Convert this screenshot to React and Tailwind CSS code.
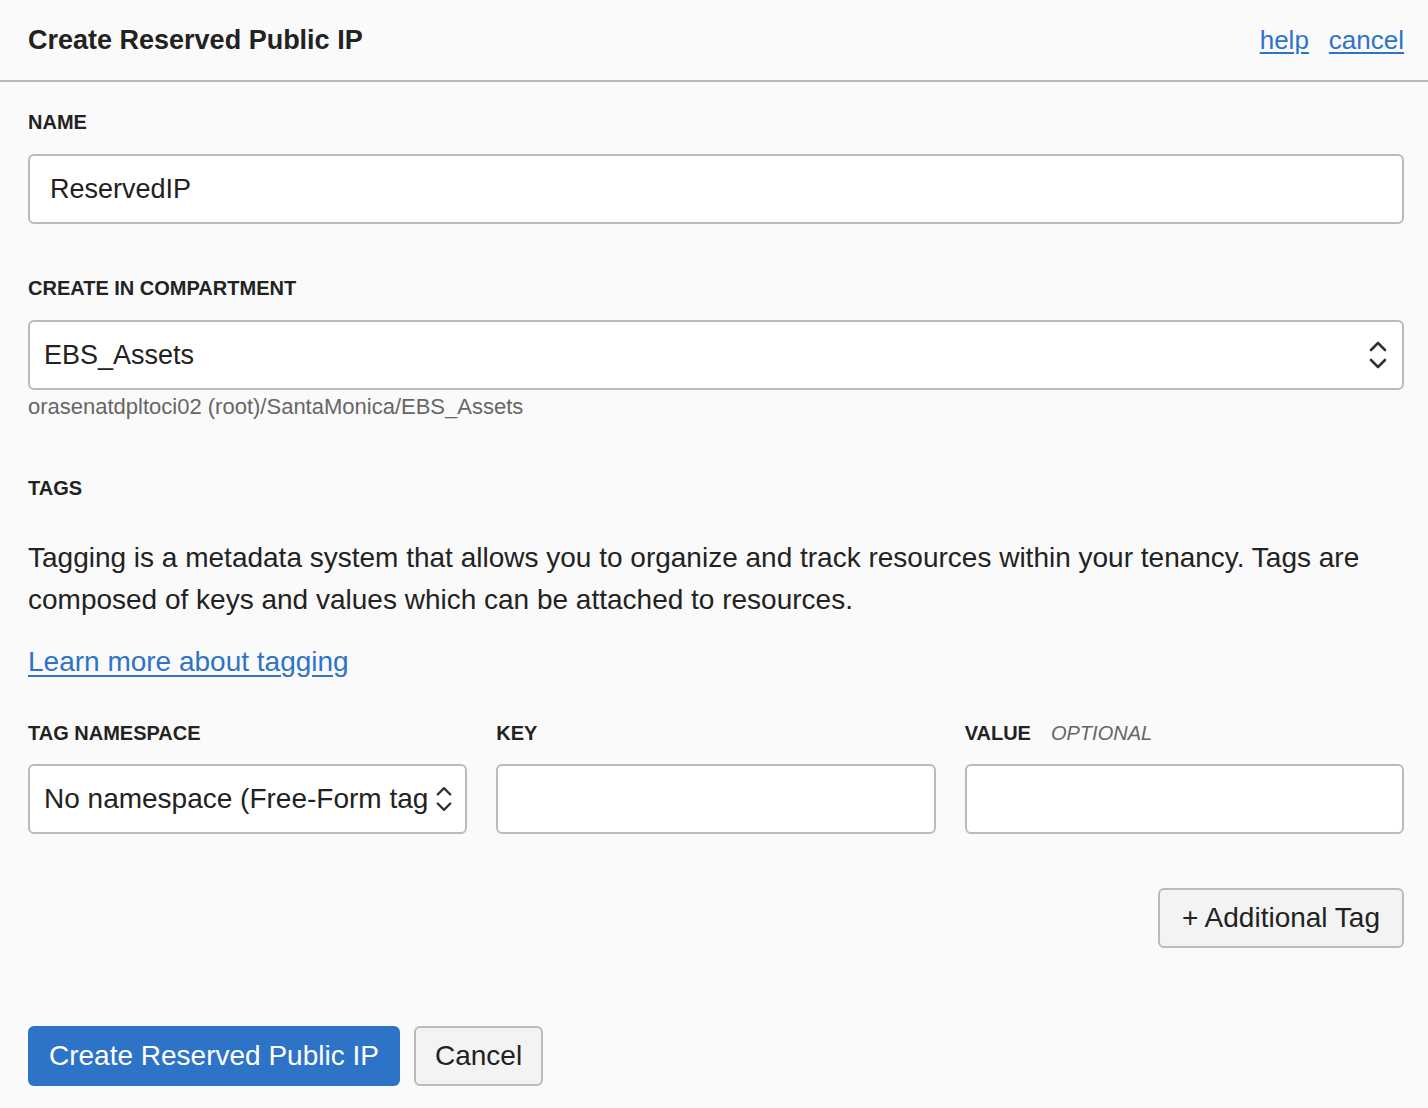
import { useState } from "react";

function Chevrons({ className }) {
  return (
    <svg
      viewBox="0 0 20 32"
      className={className}
      fill="none"
      stroke="#333333"
      strokeWidth="2.6"
      strokeLinecap="round"
      strokeLinejoin="round"
    >
      <polyline points="3,11 10,4 17,11" />
      <polyline points="3,21 10,28 17,21" />
    </svg>
  );
}

function Label({ children, className = "" }) {
  return (
    <div className={"text-[20px] leading-6 font-bold text-[#222]" + " " + className}>
      {children}
    </div>
  );
}

export default function App() {

  const [name, setName] =
    useState("ReservedIP");

  const [tagKey, setTagKey] =
    useState("");

  const [tagValue, setTagValue] =
    useState("");

  return (
    <div
      className="min-h-[1108px] bg-[#fafafa] text-[#222]"
      style={{ fontFamily: '"Liberation Sans", Arial, sans-serif' }}
    >

      {/* Header */}
      <div className="h-[82px] flex items-center justify-between pl-[28px] pr-[24px] border-b-2 border-[#b6babe]">

        <h1 className="text-[27px] font-semibold text-[#222] pt-[1px]">
          Create Reserved Public IP
        </h1>

        <div className="flex items-center gap-[20px] text-[26px] text-[#2d74c8] pt-[1px]">
          <a href="#" className="underline underline-offset-[3px]">help</a>
          <a href="#" className="underline underline-offset-[3px]">cancel</a>
        </div>

      </div>

      <div className="pl-[28px] pr-[24px] pt-[28px]">

        {/* Name */}
        <Label>NAME</Label>

        <input
          value={name}
          onChange={(e) => setName(e.target.value)}
          className="mt-5 block w-full h-[70px] bg-white border-2 border-[#b8bcc0] rounded-[6px] px-[20px] text-[27px] text-[#222] outline-none"
        />

        {/* Compartment */}
        <Label className="mt-[52px]">CREATE IN COMPARTMENT</Label>

        <div className="mt-5 h-[70px] bg-white border-2 border-[#b8bcc0] rounded-[6px] pl-[14px] pr-[14px] flex items-center justify-between">
          <span className="text-[27px] text-[#222]">EBS_Assets</span>
          <Chevrons className="w-[20px] h-[32px]" />
        </div>

        <div className="mt-[4px] text-[22px] leading-[26px] text-[#666]">
          orasenatdpltoci02 (root)/SantaMonica/EBS_Assets
        </div>

        {/* Tags */}
        <Label className="mt-[56px]">TAGS</Label>

        <p className="mt-[37px] text-[28px] leading-[42px] text-[#222]">
          Tagging is a metadata system that allows you to organize and track resources within your tenancy. Tags are composed of keys and values which can be attached to resources.
        </p>

        <a
          href="#"
          className="mt-[20px] block w-fit text-[28px] leading-[42px] text-[#2d74c8] underline underline-offset-[4px]"
        >
          Learn more about tagging
        </a>

        <div className="mt-[38px] grid grid-cols-3 gap-[29px]">

          <div>
            <Label>TAG NAMESPACE</Label>
            <div className="mt-[19px] h-[70px] bg-white border-2 border-[#b8bcc0] rounded-[6px] pl-[14px] pr-[12px] flex items-center gap-[8px] overflow-hidden">
              <span className="text-[28px] text-[#222] whitespace-nowrap overflow-hidden flex-1">
                No namespace (Free-Form tag)
              </span>
              <Chevrons className="w-[18px] h-[30px] shrink-0" />
            </div>
          </div>

          <div>
            <Label>KEY</Label>
            <input
              value={tagKey}
              onChange={(e) => setTagKey(e.target.value)}
              className="mt-[19px] block w-full h-[70px] bg-white border-2 border-[#b8bcc0] rounded-[6px] px-[20px] text-[27px] outline-none"
            />
          </div>

          <div>
            <div className="flex items-baseline gap-[20px]">
              <Label>VALUE</Label>
              <span className="text-[20px] leading-6 italic text-[#666]">OPTIONAL</span>
            </div>
            <input
              value={tagValue}
              onChange={(e) => setTagValue(e.target.value)}
              className="mt-[19px] block w-full h-[70px] bg-white border-2 border-[#b8bcc0] rounded-[6px] px-[20px] text-[27px] outline-none"
            />
          </div>

        </div>

        <div className="mt-[54px] flex justify-end">
          <button className="h-[60px] px-[22px] bg-[#f3f3f3] border-2 border-[#b8bcc0] rounded-[6px] text-[28px] text-[#222]">
            + Additional Tag
          </button>
        </div>

        {/* Actions */}
        <div className="mt-[78px] flex items-center gap-[14px]">

          <button className="h-[60px] px-[21px] bg-[#2d74c8] rounded-[6px] text-[28px] text-white">
            Create Reserved Public IP
          </button>

          <button className="h-[60px] px-[19px] bg-[#f3f3f3] border-2 border-[#b8bcc0] rounded-[6px] text-[28px] text-[#222]">
            Cancel
          </button>

        </div>

      </div>

    </div>
  );
}
